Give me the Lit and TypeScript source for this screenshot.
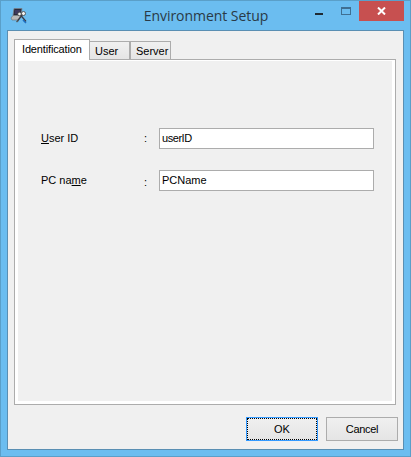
import { LitElement, html, css } from "lit";
import { customElement } from "lit/decorators.js";

@customElement("app-root")
export class AppRoot extends LitElement {
  static styles = css`
    :host { display: block; width: 411px; height: 457px; font-family: "Liberation Sans", Arial, sans-serif; font-size: 11px; color: #000; }
    * { box-sizing: border-box; }
    .window { width: 411px; height: 457px; background: #6bbdf0; border: 1px solid #5a9fc9; display: flex; flex-direction: column; padding: 0 6px 6px 6px; }
    .titlebar { height: 29px; flex: none; display: grid; grid-template-columns: 1fr auto 1fr; align-items: start; margin: 0 -6px; padding: 0 6px 0 9px; }
    .app-icon { margin-top: 6px; display: block; }
    .title { font-family: "Open Sans", "Noto Sans", sans-serif; font-size: 14px; line-height: 20px; color: #2a3a46; padding-top: 5px; margin-right: 2px; letter-spacing: -0.05px; white-space: nowrap; }
    .controls { justify-self: end; display: flex; }
    .ctl { height: 20px; display: flex; align-items: center; justify-content: center; }
    .ctl.min { width: 26px; align-items: flex-end; padding-bottom: 6px; }
    .ctl.max { width: 27px; }
    .ctl.close { width: 45px; background: #c75050; }
    .ctl svg { display: block; }
    .client { flex: 1; background: #f0f0f0; border: 1px solid #5a8fb3; padding: 8px 7px 8px 6px; display: flex; flex-direction: column; }
    .tabs { display: flex; align-items: flex-end; height: 21px; flex: none; position: relative; z-index: 1; margin-bottom: -1px; }
    .tab { height: 19px; border: 1px solid #acacac; border-left: none; background: linear-gradient(#f0f0f0, #e5e5e5); padding: 3px 0 0 5px; width: 40px; }
    .tab.server { width: 41px; border-left: 1px solid #acacac; }
    .tab.active { height: 21px; width: 76px; background: #fff; border-left: 1px solid #acacac; border-bottom: none; padding: 3px 0 0 7px; letter-spacing: -0.15px; }
    .panel { flex: 1; border: 1px solid #acacac; background: #f0f0f0; box-shadow: inset 3px 1px 0 #fff, inset -3px -3px 0 #fff; display: flex; flex-direction: column; gap: 21px; padding: 68px 21px 0 26px; }
    .row { display: grid; grid-template-columns: 103px 15px 1fr; height: 21px; align-items: start; line-height: 19px; }
    .label { padding-top: 1px; }
    .input { height: 21px; border: 1px solid #acacac; background: #fff; padding: 0 2px; }
    .tight { letter-spacing: -0.45px; }
    .colon.low { padding-top: 3px; }
    .footer { display: flex; justify-content: flex-end; gap: 8px; padding-top: 12px; flex: none; margin-right: -2px; }
    .btn { width: 72px; height: 24px; border: 1px solid #acacac; background: linear-gradient(#f0f0f0, #e5e5e5); display: flex; align-items: center; justify-content: center; padding: 0; font: inherit; color: #000; }
    .btn.ok { border-color: #3399ff; outline: 1px dotted #000; outline-offset: -2px; }
    .btn.cancel { letter-spacing: -0.3px; }
  `;

  render() {
    return html`
      <div class="window">
        <div class="titlebar">
          <svg class="app-icon" width="18" height="18" viewBox="0 0 18 18">
            <path d="M4 1.500h8l-1 7H3z" fill="#2b2b3a" stroke="#77808c" stroke-width=".8"/>
            <path d="M5 3h5.500l-.6 4H4.500z" fill="#3f3a5e"/>
            <path d="M1 11l2-2.500h7l1 1-3 3.500H2z" fill="#b9b9b9" stroke="#6d6d6d" stroke-width=".6"/>
            <path d="M7.500 14l5-6.500M16 14.500L10.500 8" stroke="#3a3a44" stroke-width="1.300" fill="none"/>
            <circle cx="13.500" cy="6.500" r="2" fill="#f4f4f4" stroke="#444" stroke-width=".8"/>
            <circle cx="9.500" cy="7" r="1.800" fill="#f4f4f4" stroke="#444" stroke-width=".8"/>
            <path d="M13 13l3 3" stroke="#1f6fc0" stroke-width="1.500"/>
            <path d="M6.500 15l1.500-1.500" stroke="#555" stroke-width="1.500"/>
          </svg>
          <div class="title">Environment Setup</div>
          <div class="controls">
            <div class="ctl min"><svg width="8" height="2"><rect width="8" height="2" fill="#1f2a33"/></svg></div>
            <div class="ctl max"><svg width="10" height="8" viewBox="0 0 10 8"><rect x=".5" y=".5" width="9" height="7" fill="none" stroke="#3f6f92"/><rect width="10" height="2" fill="#3f6f92"/></svg></div>
            <div class="ctl close"><svg width="9" height="8" viewBox="0 0 9 8"><path d="M1 .5L8 7.500M8 .5L1 7.500" stroke="#fff" stroke-width="2"/></svg></div>
          </div>
        </div>
        <div class="client">
          <div class="tabs">
            <div class="tab active">Identification</div>
            <div class="tab">User</div>
            <div class="tab server">Server</div>
          </div>
          <div class="panel">
            <div class="row">
              <div class="label"><u>U</u>ser ID</div>
              <div class="label">:</div>
              <div class="input tight">userID</div>
            </div>
            <div class="row">
              <div class="label">PC na<u>m</u>e</div>
              <div class="colon low">:</div>
              <div class="input">PCName</div>
            </div>
          </div>
          <div class="footer">
            <button class="btn ok">OK</button>
            <button class="btn cancel">Cancel</button>
          </div>
        </div>
      </div>
    `;
  }
}
